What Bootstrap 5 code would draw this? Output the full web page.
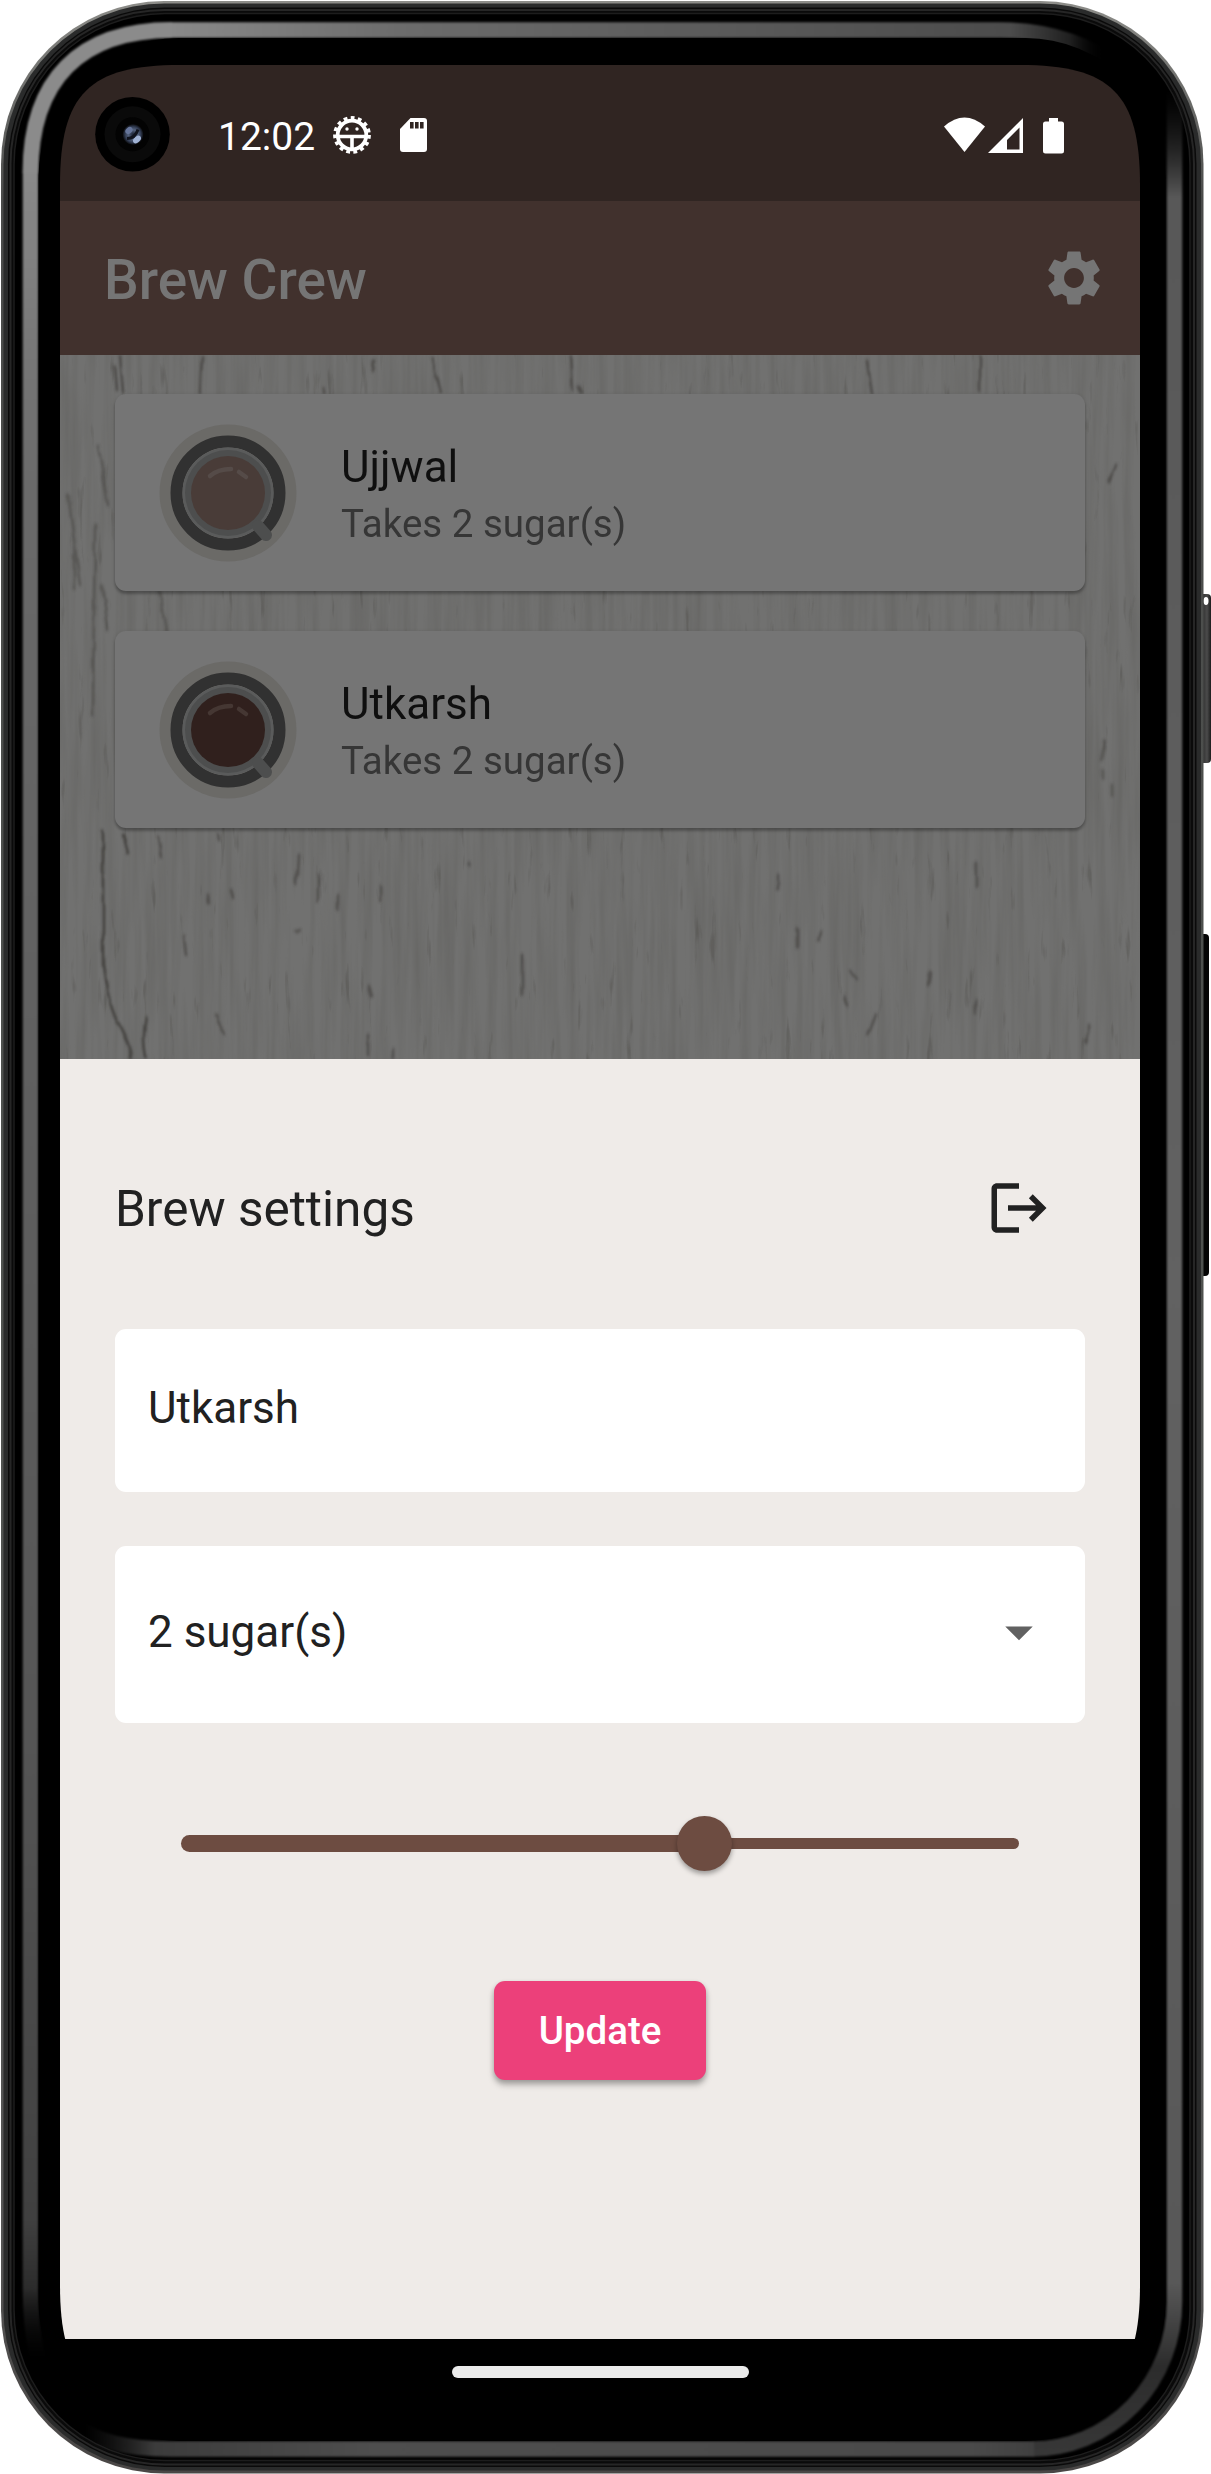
<!DOCTYPE html>
<html lang="en">
<head>
<meta charset="utf-8">
<meta name="viewport" content="width=device-width, initial-scale=1">
<title>Brew Crew</title>
<link href="https://cdn.jsdelivr.net/npm/bootstrap@5.3.0/dist/css/bootstrap.min.css" rel="stylesheet">
<style>
  body { background: #fff; font-family: Roboto, "Noto Sans", sans-serif; overflow-x: hidden; }
  .phone { width: 1211px; height: 2474px; padding: 65px 71px 69px 60px; }
  .phone-frame { inset: 0; }
  .phone-screen {
    width: 1080px; height: 2340px; background: #000;
    clip-path: path("M0 120C0 29 29 0 120 0H960C1051 0 1080 29 1080 120V2220C1080 2311 1051 2340 960 2340H120C29 2340 0 2311 0 2220Z");
  }
  .status-bar { height: 136px; background: #302522; color: #fff; padding: 4px 76px 0 35px; }
  .clock { font-size: 39px; line-height: 48px; margin-left: 47px; width: 98px; padding-top: 3px; }
  .app-bar { height: 154px; background: #41312d; color: #757575; padding: 0 33px 0 44px; }
  .app-title { font-size: 55px; font-weight: 500; line-height: 64px; padding-top: 3px; }
  .wood { height: 704px; background: #6f6f6e; padding: 39px 55px 0; }
  .wood-grain { inset: 0; }
  .brew-tile {
    height: 197px; border: 0; border-radius: 11px; background: #757575; padding-left: 44px; gap: 44px;
    box-shadow: 0 3px 3px rgba(0,0,0,.25), 0 1px 4px rgba(0,0,0,.12);
  }
  .brew-list { gap: 40px; }
  .brew-name { font-size: 44px; line-height: 52px; color: #0f0f0f; }
  .brew-note { font-size: 38.5px; line-height: 46px; color: #363636; margin-top: 8px; margin-bottom: -2px; }
  .sheet { height: 1280px; background: #efebe8; padding: 116px 55px 0; color: #212121; }
  .sheet-title { font-size: 49.5px; line-height: 66px; padding-top: 1px; }
  .sheet-head { padding-right: 33px; height: 66px; }
  .brew-field {
    border: 0; border-radius: 11px; background: #fff; color: #212121; font-size: 44px;
    line-height: 52px; padding: 0 33px;
  }
  .brew-field:focus { box-shadow: none; }
  .field-name { height: 163px; margin-top: 88px; padding-bottom: 5px; }
  .field-sugar { height: 177px; margin-top: 54px; padding-bottom: 5px; }
  .strength { height: 55px; margin: 93px 66px 0; }
  .track-on { height: 17px; width: 523px; background: #6d4c41; border-radius: 9px 0 0 9px; }
  .track-off { height: 11.5px; background: #6d4c41; border-radius: 0 6px 6px 0; }
  .knob { left: 496px; top: 0; width: 55px; height: 55px; background: #6d4c41; border-radius: 50%; box-shadow: 0 3px 5px rgba(0,0,0,.35); }
  .btn-update {
    --bs-btn-color: #fff; --bs-btn-bg: #ec407a; --bs-btn-hover-bg: #d81b60; --bs-btn-hover-color: #fff;
    width: 212px; height: 99px; margin-top: 110px; border: 0; border-radius: 11px; padding: 1px 0 0;
    font-size: 38.5px; font-weight: 500;
    box-shadow: 0 5px 6px rgba(0,0,0,.25), 0 2px 5px rgba(0,0,0,.15);
  }
  .nav-strip { height: 66px; padding-bottom: 0; }
  .home-pill { width: 297px; height: 12px; border-radius: 6px; background: #ebebeb; }
</style>
</head>
<body>
<main class="phone position-relative">
  <svg class="phone-frame position-absolute" width="1211" height="2474" viewBox="0 0 1211 2474" fill="none" aria-hidden="true">
    <defs>
      <linearGradient id="rim" x1="0" y1="0" x2="0" y2="2474" gradientUnits="userSpaceOnUse"><stop offset="0" stop-color="#8d8d89"/><stop offset=".08" stop-color="#4a4b4a"/><stop offset=".5" stop-color="#4f524f"/><stop offset=".9" stop-color="#555"/><stop offset="1" stop-color="#4a4746"/></linearGradient>
      <linearGradient id="shineL" x1="0" y1="150" x2="0" y2="2400" gradientUnits="userSpaceOnUse"><stop offset="0" stop-color="#8c8c8c"/><stop offset=".06" stop-color="#7e7e7e"/><stop offset=".15" stop-color="#6a6a6a"/><stop offset=".35" stop-color="#626262"/><stop offset=".7" stop-color="#565656"/><stop offset=".92" stop-color="#404040"/><stop offset=".95" stop-color="#2c2c2c"/><stop offset=".985" stop-color="#000" stop-opacity="0"/></linearGradient>
      <linearGradient id="shineT" x1="150" y1="0" x2="1150" y2="0" gradientUnits="userSpaceOnUse"><stop offset="0" stop-color="#8c8c8c"/><stop offset=".25" stop-color="#6c6c6c"/><stop offset=".6" stop-color="#595959"/><stop offset=".86" stop-color="#4c4c4c"/><stop offset=".92" stop-color="#202020"/><stop offset=".955" stop-color="#000" stop-opacity="0"/></linearGradient>
      <linearGradient id="shineR" x1="0" y1="90" x2="0" y2="2474" gradientUnits="userSpaceOnUse"><stop offset="0" stop-color="#222" stop-opacity="0"/><stop offset=".045" stop-color="#585858"/><stop offset=".5" stop-color="#626262"/><stop offset=".92" stop-color="#585858"/><stop offset=".955" stop-color="#2c2c2c"/><stop offset="1" stop-color="#3a3a3a"/></linearGradient>
      <linearGradient id="shineB" x1="75" y1="0" x2="1070" y2="0" gradientUnits="userSpaceOnUse"><stop offset=".01" stop-color="#222" stop-opacity="0"/><stop offset=".08" stop-color="#3c3c3c"/><stop offset=".3" stop-color="#4e4e4e"/><stop offset=".9" stop-color="#4a4a4a"/><stop offset="1" stop-color="#3a3a3a"/></linearGradient>
      <linearGradient id="power" x1="1203" y1="0" x2="1211" y2="0" gradientUnits="userSpaceOnUse"><stop offset="0" stop-color="#333"/><stop offset=".5" stop-color="#4b4b4b"/><stop offset="1" stop-color="#1c1c1c"/></linearGradient>
      <filter id="edgeSoft" x="0" y="0" width="1211" height="2474" filterUnits="userSpaceOnUse" color-interpolation-filters="sRGB"><feGaussianBlur stdDeviation="1.2"/></filter>
    </defs>
    <path d="M1200 594h7a4 4 0 0 1 4 4V759a4 4 0 0 1-4 4h-7z" fill="url(#power)"/>
    <ellipse cx="1206" cy="601" rx="2.500" ry="4" fill="#fff"/>
    <path d="M1200 934h5a4 4 0 0 1 4 4V1272a4 4 0 0 1-4 4h-5z" fill="#050505"/>
    <rect x="1" y="1" width="1202.500" height="2472.500" rx="163" fill="url(#rim)"/>
    <rect x="3.500" y="3.500" width="1197.500" height="2467" rx="161" fill="#2a2b2b"/>
    <rect x="8" y="7.500" width="1188.500" height="2459.500" rx="157" fill="#0a0a0a"/>
    <rect x="10.500" y="10" width="1183.500" height="2454.500" rx="154" stroke="#262626" stroke-width="2"/>
    <rect x="14" y="13.500" width="1176" height="2447" rx="151" fill="#000" stroke="#1d1d1d" stroke-width="1.500"/>
    <g stroke-width="15.500" filter="url(#edgeSoft)">
      <path d="M1174.500 92V2302a142 147 0 0 1-142 147" stroke="url(#shineR)"/>
      <path d="M75 2425Q105 2449 170 2449H1034" stroke="url(#shineB)"/>
      <path d="M30.500 172V2290Q31 2360 52 2392" stroke="url(#shineL)"/>
      <path d="M30.500 173C30.500 80 80 30 172 30" stroke="#8b8b8b" stroke-width="16"/>
      <path d="M171 30.010H1000Q1070 30 1120 68" stroke="url(#shineT)"/>
    </g>
    <rect x="38.500" y="38" width="1127" height="2403" rx="140" fill="#000"/>
  </svg>

  <div class="phone-screen d-flex flex-column position-relative">
    <div class="status-bar d-flex align-items-center flex-shrink-0">
      <svg width="76" height="76" viewBox="0 0 76 76" aria-hidden="true">
        <defs><radialGradient id="lens" cx=".5" cy=".5" r=".5"><stop offset="0" stop-color="#1a2133"/><stop offset=".45" stop-color="#56647f"/><stop offset=".75" stop-color="#303a50"/><stop offset="1" stop-color="#070708"/></radialGradient></defs>
        <circle cx="37.500" cy="37.300" r="37.300" fill="#000"/><circle cx="37.500" cy="37.300" r="28" fill="#0a0a0a"/><circle cx="37.500" cy="37.300" r="17" fill="#030303"/>
        <circle cx="38" cy="37.500" r="10.500" fill="url(#lens)"/>
        <ellipse cx="34" cy="33.500" rx="4" ry="3" fill="#66759a" transform="rotate(-40 34 33.500)"/><ellipse cx="42" cy="42.500" rx="4.500" ry="3" fill="#a0b2d4" transform="rotate(-40 42 42.500)"/><path d="M32 41.500q8 0 11-9" stroke="#10131d" stroke-width="3" fill="none"/>
      </svg>
      <span class="clock">12:02</span>
      <svg width="40" height="40" viewBox="-20 -20 40 40" class="ms-3" fill="none" stroke="#fff" aria-hidden="true">
        <circle r="14.300" stroke-width="3.800"/>
        <circle r="17" stroke-width="3.800" stroke-dasharray="3.800 3.321"/>
        <path d="M-14 1.500H14M0 2V15" stroke-width="3.600"/><circle cx="-5" cy="-6" r="1.700" fill="#fff" stroke="none"/><circle cx="5" cy="-6" r="1.700" fill="#fff" stroke="none"/>
      </svg>
      <svg width="28" height="36" viewBox="0 0 28 36" style="margin-left:28px" aria-hidden="true"><path d="M10.500 1H24a3 3 0 0 1 3 3V32a3 3 0 0 1-3 3H3a3 3 0 0 1-3-3V12z" fill="#fff"/><path d="M10 5h3.600v6.500H10zM15 5h3.600v6.500H15zM20 5h3.600v6.500H20z" fill="#302522"/></svg>
      <svg class="ms-auto" width="120" height="38" viewBox="0 0 120 38" fill="#fff" aria-hidden="true">
        <path d="M0 10.500Q20.500-7.500 41 10.500L20.500 36z"/>
        <path fill-rule="evenodd" d="M44 37 79 2V37zM63 33.500H75.500V11.500L63 24z"/>
        <path d="M105 2h9v3.500h3.500a2.500 2.500 0 0 1 2.500 2.500V35a2.500 2.500 0 0 1-2.500 2.500h-16A2.500 2.500 0 0 1 99 35V8a2.500 2.500 0 0 1 2.500-2.500h3.500z"/>
      </svg>
    </div>

    <nav class="app-bar d-flex align-items-center justify-content-between flex-shrink-0">
      <span class="app-title">Brew Crew</span>
      <svg width="66" height="66" viewBox="0 0 24 24" fill="#757575" role="img" aria-label="Settings"><path d="M19.140 12.940c.04-.3.060-.61.060-.94 0-.32-.02-.64-.07-.94l2.030-1.580c.18-.14.23-.41.120-.61l-1.920-3.320c-.12-.22-.37-.29-.59-.22l-2.390.960c-.5-.38-1.030-.7-1.620-.94L14.400 2.810c-.04-.24-.24-.41-.48-.41h-3.840c-.24 0-.43.170-.47.410L9.250 5.350c-.59.240-1.130.570-1.620.940L5.240 5.330c-.22-.08-.47 0-.59.220L2.740 8.870c-.12.210-.08.470.120.610l2.030 1.580c-.05.3-.09.630-.09.940s.02.640.070.940l-2.030 1.580c-.18.140-.23.410-.12.610l1.920 3.320c.12.220.370.290.590.220l2.390-.96c.5.380 1.030.7 1.620.940l.36 2.540c.05.240.240.410.480.410h3.840c.24 0 .44-.17.470-.41l.36-2.540c.59-.24 1.130-.56 1.620-.94l2.390.960c.22.080.470 0 .59-.22l1.920-3.320c.12-.22.070-.47-.12-.61zM12 15.600c-1.980 0-3.600-1.620-3.600-3.600s1.620-3.600 3.600-3.600 3.600 1.620 3.600 3.600-1.620 3.600-3.600 3.600z"/></svg>
    </nav>

    <section class="wood position-relative flex-shrink-0">
      <svg class="wood-grain position-absolute" width="1080" height="704" viewBox="0 0 1080 704" aria-hidden="true">
        <defs>
          <filter id="grain" x="0" y="0" width="1" height="1" color-interpolation-filters="sRGB"><feTurbulence type="fractalNoise" baseFrequency=".11 .006" numOctaves="3" seed="8"/><feColorMatrix values="0 0 0 0 .28  0 0 0 0 .275  0 0 0 0 .255  1.500 0 0 0 -.55"/></filter>
          <filter id="flecks" x="0" y="0" width="1" height="1" color-interpolation-filters="sRGB"><feTurbulence type="fractalNoise" baseFrequency=".12 .018" numOctaves="3" seed="21"/><feColorMatrix values="0 0 0 0 .22  0 0 0 0 .21  0 0 0 0 .19  6 0 0 0 -4.100"/></filter>
          <filter id="rough" x="0" y="0" width="1080" height="704" filterUnits="userSpaceOnUse" color-interpolation-filters="sRGB"><feTurbulence type="fractalNoise" baseFrequency=".1 .05" numOctaves="2" seed="3"/><feDisplacementMap in="SourceGraphic" scale="5" xChannelSelector="R" yChannelSelector="G"/><feGaussianBlur stdDeviation=".8 1.400"/></filter>
        </defs>
        <rect width="1080" height="704" fill="#717170"/>
        <rect width="1080" height="704" filter="url(#grain)" opacity=".26"/>
        <rect width="1080" height="704" filter="url(#flecks)" opacity=".22"/>
        <g filter="url(#rough)" stroke="#3e3c39" stroke-width="2.800" stroke-linecap="round" fill="none" opacity=".8">
          <path d="M60 0l3 38M142 3l-2 35M313 5l-1 10M372 3l8 34M511 0l2 35M518 30l3 8M264 33l1 5M54 12l2 22M807 6l5 32M920 0v36M1056 110l-8 18" opacity=".8"/>
          <path d="M100 237l6 40M38 90l10 60M8 140l12 90M35 170l-2 190M14 200v35M42 230l6 45M1045 385l-4 20M1042 415v8M1052 430v10" opacity=".55"/>
          <path d="M43 476V610q5 40 16 60t12 34M63 480l5 18M86 662q-4 20 0 40"/>
          <path d="M98 482l3 20M124 580l2 20M157 660l8 20M239 500l-1 20M236 516v12M171 535l2 8M148 540l1 8M158 480l1 5M278 540v14M258 520v26M321 530v16M308 630l3 12M409 508v3M240 574l-3 3M308 680v20M462 600v40M333 695v8" opacity=".7"/>
          <path d="M738 574v18M762 576l-4 10M790 615l6 10M870 618l-2 12M784 640l3 10M815 660l-8 20M1030 670l-5 18M916 508v24M718 520v14M916 645v14" opacity=".7"/>
        </g>
      </svg>
      <div class="brew-list d-flex flex-column position-relative">
        <article class="card brew-tile flex-row align-items-center">
          <svg width="138" height="138" viewBox="-69 -69 138 138" fill="none" aria-hidden="true">
            <circle r="68.500" fill="#6b6a67"/><circle r="51.500" stroke="#313131" stroke-width="12"/>
            <circle r="45.500" fill="#5a5b5b"/><circle r="43" fill="#4d4e4e"/><path d="M30 33 38 42" stroke="#4d4e4e" stroke-width="12" stroke-linecap="round"/>
            <circle r="37" fill="#493c38"/><path d="M-18-17Q-10-24 3-24M11-21l7 5" stroke="#554b48" stroke-width="4.500" stroke-linecap="round"/>
          </svg>
          <div><div class="brew-name">Ujjwal</div><div class="brew-note">Takes 2 sugar(s)</div></div>
        </article>
        <article class="card brew-tile flex-row align-items-center">
          <svg width="138" height="138" viewBox="-69 -69 138 138" fill="none" aria-hidden="true">
            <circle r="68.500" fill="#6b6a67"/><circle r="51.500" stroke="#313131" stroke-width="12"/>
            <circle r="45.500" fill="#5a5b5b"/><circle r="43" fill="#4d4e4e"/><path d="M30 33 38 42" stroke="#4d4e4e" stroke-width="12" stroke-linecap="round"/>
            <circle r="37" fill="#30201d"/><path d="M-18-17Q-10-24 3-24M11-21l7 5" stroke="#453733" stroke-width="4.500" stroke-linecap="round"/>
          </svg>
          <div><div class="brew-name">Utkarsh</div><div class="brew-note">Takes 2 sugar(s)</div></div>
        </article>
      </div>
    </section>

    <section class="sheet flex-shrink-0">
      <div class="sheet-head d-flex align-items-center justify-content-between">
        <span class="sheet-title">Brew settings</span>
        <svg width="66" height="66" viewBox="0 0 24 24" fill="#212121" role="img" aria-label="Log out"><path d="M17 7l-1.410 1.410L18.170 11H8v2h10.170l-2.580 2.580L17 17l5-5zM4 5h8V3H4c-1.100 0-2 .9-2 2v14c0 1.100.9 2 2 2h8v-2H4V5z"/></svg>
      </div>
      <input class="form-control brew-field field-name" type="text" value="Utkarsh" aria-label="Name">
      <div class="brew-field field-sugar d-flex align-items-center justify-content-between">
        <span>2 sugar(s)</span>
        <svg width="66" height="66" viewBox="0 0 24 24" fill="#616161" aria-hidden="true"><path d="M7 10l5 5 5-5z"/></svg>
      </div>
      <div class="strength position-relative d-flex align-items-center">
        <div class="track-on"></div><div class="track-off flex-grow-1"></div>
        <div class="knob position-absolute"></div>
      </div>
      <div class="d-flex justify-content-center"><button type="button" class="btn btn-update">Update</button></div>
    </section>

    <div class="nav-strip d-flex align-items-center justify-content-center flex-shrink-0"><div class="home-pill"></div></div>
  </div>
</main>
<script src="https://cdn.jsdelivr.net/npm/bootstrap@5.3.0/dist/js/bootstrap.bundle.min.js"></script>
</body>
</html>
